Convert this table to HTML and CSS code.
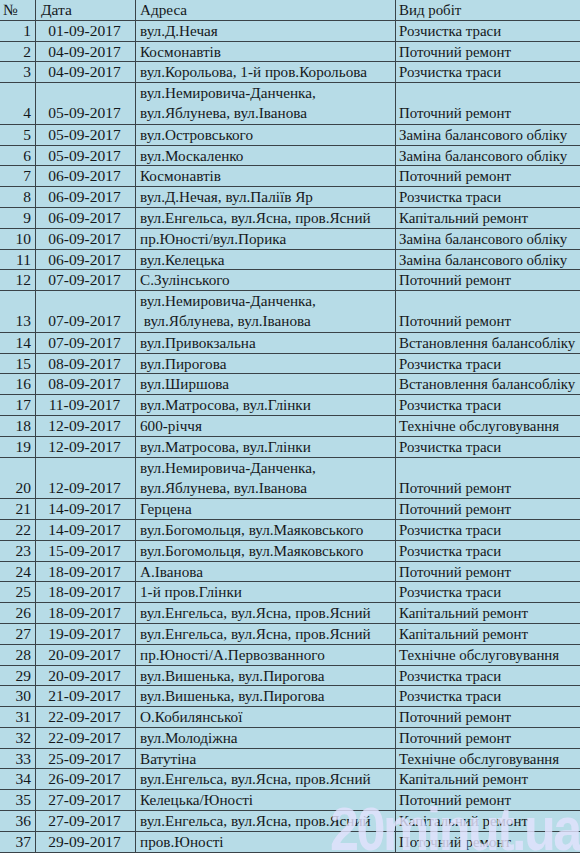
FILE: index.html
```html
<!DOCTYPE html>
<html lang="uk">
<head>
<meta charset="utf-8">
<title>Таблиця робіт</title>
<link rel="stylesheet" href="styles.css">
</head>
<body>
<div class="sheet">
  <div class="row head"><div class="c num hl">№</div><div class="c date hl">Дата</div><div class="c addr">Адреса</div><div class="c work">Вид робіт</div></div>
  <div class="row"><div class="c num">1</div><div class="c date">01-09-2017</div><div class="c addr">вул.Д.Нечая</div><div class="c work">Розчистка траси</div></div>
  <div class="row"><div class="c num">2</div><div class="c date">04-09-2017</div><div class="c addr">Космонавтів</div><div class="c work">Поточний ремонт</div></div>
  <div class="row"><div class="c num">3</div><div class="c date">04-09-2017</div><div class="c addr">вул.Корольова, 1-й пров.Корольова</div><div class="c work">Розчистка траси</div></div>
  <div class="row tall"><div class="c num">4</div><div class="c date">05-09-2017</div><div class="c addr">вул.Немировича-Данченка,<br>вул.Яблунева, вул.Іванова</div><div class="c work">Поточний ремонт</div></div>
  <div class="row"><div class="c num">5</div><div class="c date">05-09-2017</div><div class="c addr">вул.Островського</div><div class="c work">Заміна балансового обліку</div></div>
  <div class="row"><div class="c num">6</div><div class="c date">05-09-2017</div><div class="c addr">вул.Москаленко</div><div class="c work">Заміна балансового обліку</div></div>
  <div class="row"><div class="c num">7</div><div class="c date">06-09-2017</div><div class="c addr">Космонавтів</div><div class="c work">Поточний ремонт</div></div>
  <div class="row"><div class="c num">8</div><div class="c date">06-09-2017</div><div class="c addr">вул.Д.Нечая, вул.Паліїв Яр</div><div class="c work">Розчистка траси</div></div>
  <div class="row"><div class="c num">9</div><div class="c date">06-09-2017</div><div class="c addr">вул.Енгельса, вул.Ясна, пров.Ясний</div><div class="c work">Капітальний ремонт</div></div>
  <div class="row"><div class="c num">10</div><div class="c date">06-09-2017</div><div class="c addr">пр.Юності/вул.Порика</div><div class="c work">Заміна балансового обліку</div></div>
  <div class="row"><div class="c num">11</div><div class="c date">06-09-2017</div><div class="c addr">вул.Келецька</div><div class="c work">Заміна балансового обліку</div></div>
  <div class="row"><div class="c num">12</div><div class="c date">07-09-2017</div><div class="c addr">С.Зулінського</div><div class="c work">Поточний ремонт</div></div>
  <div class="row tall"><div class="c num">13</div><div class="c date">07-09-2017</div><div class="c addr">вул.Немировича-Данченка,<br>&nbsp;вул.Яблунева, вул.Іванова</div><div class="c work">Поточний ремонт</div></div>
  <div class="row"><div class="c num">14</div><div class="c date">07-09-2017</div><div class="c addr">вул.Привокзальна</div><div class="c work">Встановлення балансобліку</div></div>
  <div class="row"><div class="c num">15</div><div class="c date">08-09-2017</div><div class="c addr">вул.Пирогова</div><div class="c work">Розчистка траси</div></div>
  <div class="row"><div class="c num">16</div><div class="c date">08-09-2017</div><div class="c addr">вул.Ширшова</div><div class="c work">Встановлення балансобліку</div></div>
  <div class="row"><div class="c num">17</div><div class="c date">11-09-2017</div><div class="c addr">вул.Матросова, вул.Глінки</div><div class="c work">Розчистка траси</div></div>
  <div class="row"><div class="c num">18</div><div class="c date">12-09-2017</div><div class="c addr">600-річчя</div><div class="c work">Технічне обслуговування</div></div>
  <div class="row"><div class="c num">19</div><div class="c date">12-09-2017</div><div class="c addr">вул.Матросова, вул.Глінки</div><div class="c work">Розчистка траси</div></div>
  <div class="row tall"><div class="c num">20</div><div class="c date">12-09-2017</div><div class="c addr">вул.Немировича-Данченка,<br>вул.Яблунева, вул.Іванова</div><div class="c work">Поточний ремонт</div></div>
  <div class="row"><div class="c num">21</div><div class="c date">14-09-2017</div><div class="c addr">Герцена</div><div class="c work">Поточний ремонт</div></div>
  <div class="row"><div class="c num">22</div><div class="c date">14-09-2017</div><div class="c addr">вул.Богомольця, вул.Маяковського</div><div class="c work">Розчистка траси</div></div>
  <div class="row"><div class="c num">23</div><div class="c date">15-09-2017</div><div class="c addr">вул.Богомольця, вул.Маяковського</div><div class="c work">Розчистка траси</div></div>
  <div class="row"><div class="c num">24</div><div class="c date">18-09-2017</div><div class="c addr">А.Іванова</div><div class="c work">Поточний ремонт</div></div>
  <div class="row"><div class="c num">25</div><div class="c date">18-09-2017</div><div class="c addr">1-й пров.Глінки</div><div class="c work">Розчистка траси</div></div>
  <div class="row"><div class="c num">26</div><div class="c date">18-09-2017</div><div class="c addr">вул.Енгельса, вул.Ясна, пров.Ясний</div><div class="c work">Капітальний ремонт</div></div>
  <div class="row"><div class="c num">27</div><div class="c date">19-09-2017</div><div class="c addr">вул.Енгельса, вул.Ясна, пров.Ясний</div><div class="c work">Капітальний ремонт</div></div>
  <div class="row"><div class="c num">28</div><div class="c date">20-09-2017</div><div class="c addr">пр.Юності/А.Первозванного</div><div class="c work">Технічне обслуговування</div></div>
  <div class="row"><div class="c num">29</div><div class="c date">20-09-2017</div><div class="c addr">вул.Вишенька, вул.Пирогова</div><div class="c work">Розчистка траси</div></div>
  <div class="row"><div class="c num">30</div><div class="c date">21-09-2017</div><div class="c addr">вул.Вишенька, вул.Пирогова</div><div class="c work">Розчистка траси</div></div>
  <div class="row"><div class="c num">31</div><div class="c date">22-09-2017</div><div class="c addr">О.Кобилянської</div><div class="c work">Поточний ремонт</div></div>
  <div class="row"><div class="c num">32</div><div class="c date">22-09-2017</div><div class="c addr">вул.Молодіжна</div><div class="c work">Поточний ремонт</div></div>
  <div class="row"><div class="c num">33</div><div class="c date">25-09-2017</div><div class="c addr">Ватутіна</div><div class="c work">Технічне обслуговування</div></div>
  <div class="row"><div class="c num">34</div><div class="c date">26-09-2017</div><div class="c addr">вул.Енгельса, вул.Ясна, пров.Ясний</div><div class="c work">Капітальний ремонт</div></div>
  <div class="row"><div class="c num">35</div><div class="c date">27-09-2017</div><div class="c addr">Келецька/Юності</div><div class="c work">Поточний ремонт</div></div>
  <div class="row"><div class="c num">36</div><div class="c date">27-09-2017</div><div class="c addr">вул.Енгельса, вул.Ясна, пров.Ясний</div><div class="c work">Капітальний ремонт</div></div>
  <div class="row"><div class="c num">37</div><div class="c date">29-09-2017</div><div class="c addr">пров.Юності</div><div class="c work">Поточний ремонт</div></div>
  <div class="watermark">20minut.ua</div>
</div>
</body>
</html>
```

FILE: styles.css
```css
html, body {
  margin: 0;
  padding: 0;
  background: #b7dce7;
  overflow: hidden;
}
.sheet {
  position: relative;
  width: 580px;
  height: 853px;
  overflow: hidden;
  background: #b7dce7;
  font-family: "Liberation Serif", "Times New Roman", serif;
  font-size: 14.9px;
  color: #15181b;
}
.row {
  display: grid;
  grid-template-columns: 36px 100px 260px 200px;
  height: 20.8px;
  box-sizing: border-box;
  border-bottom: 1px solid #3a4348;
}
.row.tall {
  height: 41.6px;
}
.c {
  display: flex;
  align-items: flex-end;
  box-sizing: border-box;
  border-right: 1px solid #3a4348;
  padding: 0 3px 1px 3px;
  line-height: 20px;
  white-space: nowrap;
}
.num {
  justify-content: flex-end;
  padding-right: 4px;
  font-size: 15.5px;
}
.num.hl {
  justify-content: flex-start;
}
.date {
  justify-content: center;
  padding-right: 5px;
  font-size: 15.5px;
}
.date.hl {
  justify-content: flex-start;
  padding-left: 5px;
}
.addr {
  padding-left: 4px;
  font-size: 15.2px;
}
.work {
  padding-left: 3px;
  border-right: none;
}
.watermark {
  position: absolute;
  left: 330px;
  top: 798px;
  font-family: "Liberation Sans", Arial, sans-serif;
  font-weight: bold;
  font-size: 62px;
  letter-spacing: -3px;
  line-height: 1;
  color: rgba(226, 226, 252, 0.82);
  white-space: nowrap;
  transform: scaleX(0.84);
  transform-origin: left top;
}
```
